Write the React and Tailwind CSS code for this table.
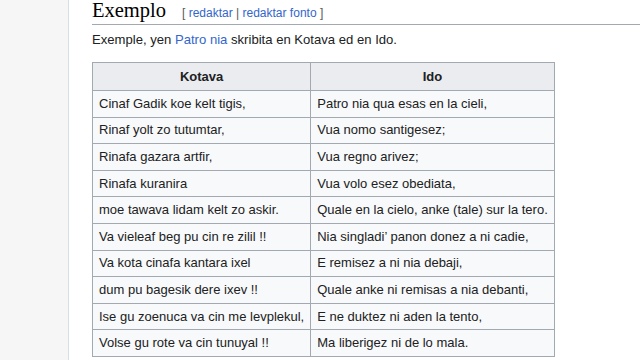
export default function App() {
  const rows = [
    ["Cinaf Gadik koe kelt tigis,", "Patro nia qua esas en la cieli,"],
    ["Rinaf yolt zo tutumtar,", "Vua nomo santigesez;"],
    ["Rinafa gazara artfir,", "Vua regno arivez;"],
    ["Rinafa kuranira", "Vua volo esez obediata,"],
    ["moe tawava lidam kelt zo askir.", "Quale en la cielo, anke (tale) sur la tero."],
    ["Va vieleaf beg pu cin re zilil !!", "Nia singladi’ panon donez a ni cadie,"],
    ["Va kota cinafa kantara ixel", "E remisez a ni nia debaji,"],
    ["dum pu bagesik dere ixev !!", "Quale anke ni remisas a nia debanti,"],
    ["Ise gu zoenuca va cin me levplekul,", "E ne duktez ni aden la tento,"],
    ["Volse gu rote va cin tunuyal !!", "Ma liberigez ni de lo mala."],
  ];

  return (
    <div className="flex h-[360px] w-[640px] overflow-hidden bg-[#f6f6f6] font-['Liberation_Sans',Arial,sans-serif] text-[#202122]">
      {/* Sidebar */}
      <div className="w-[68px] shrink-0" />

      {/* Content */}
      <div className="flex-1 border-l border-[#d6dfe8] bg-white pl-[23px]">
        <div className="-mt-[3px] flex items-baseline border-b border-[#a2a9b1] pb-[1px]">
          <h2 className="font-['Liberation_Serif',serif] text-[20.5px] leading-[26px] text-black">
            Exemplo
          </h2>
          <span className="ml-[16px] text-[12px] text-[#54595d]">
            [ <span className="text-[#3366cc]">redaktar</span> |{" "}
            <span className="text-[#3366cc]">redaktar fonto</span> ]
          </span>
        </div>

        <p className="mt-[5px] text-[13.1px] leading-[20px]">
          Exemple, yen <span className="text-[#3366cc]">Patro nia</span> skribita en Kotava ed en Ido.
        </p>

        <table className="mt-[12px] border-collapse border border-[#a2a9b1] bg-[#f8f9fa] text-[13px] leading-[18px]">
          <thead>
            <tr>
              <th className="h-[28px] border border-[#a2a9b1] bg-[#eaecf0] px-[6px] text-center font-bold">
                Kotava
              </th>
              <th className="h-[28px] border border-[#a2a9b1] bg-[#eaecf0] px-[6px] text-center font-bold">
                Ido
              </th>
            </tr>
          </thead>
          <tbody>
            {rows.map(([k, i]) => (
              <tr key={k}>
                <td className="h-[26.6px] border border-[#a2a9b1] px-[6px]">{k}</td>
                <td className="h-[26.6px] border border-[#a2a9b1] px-[6px]">{i}</td>
              </tr>
            ))}
          </tbody>
        </table>
      </div>
    </div>
  );
}
